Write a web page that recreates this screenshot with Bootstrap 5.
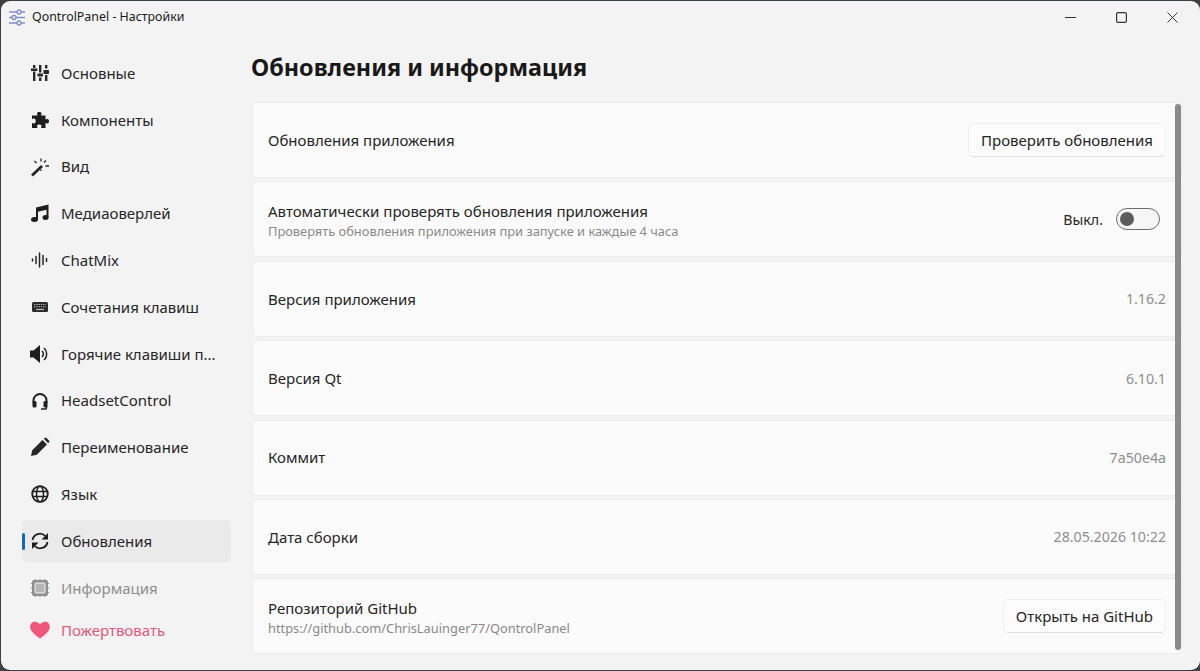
<!DOCTYPE html>
<html lang="ru">
<head>
    <meta charset="UTF-8">
    <title>QontrolPanel - Настройки</title>
    <link href="https://cdn.jsdelivr.net/npm/bootstrap@5.3.0/dist/css/bootstrap.min.css" rel="stylesheet">
    <style>
        html, body { height: 100%; overflow: hidden; }
        body { background: #3b4046; font-family: "Noto Sans", "Open Sans", sans-serif; color: #1b1b1b; }
        .app-window { height: 669px; background: #f3f3f3; border-radius: 9px; margin: 1px 0 0 1px; }
        .title-bar { height: 33px; font-size: 12.4px; padding-left: 8px; }
        .title-bar .logo { margin-right: 7px; }
        .win-btns { width: 155px; }
        .win-btns span { width: 51px; display: flex; justify-content: center; }
        .side { width: 250px; padding: 18px 0 0 21px; flex-shrink: 0; }
        .side-item { height: 42px; width: 209px; margin-bottom: 4.8px; font-size: 15px; color: #262626; border-radius: 5px; padding-left: 8px; position: relative; }
        .side-item svg { width: 20px; height: 20px; margin-right: 11px; flex-shrink: 0; }
        .side-item.active { background: #eaeaea; }
        .side-item.active::before { content: ""; position: absolute; left: 0; top: 13px; width: 3px; height: 17px; background: #0f6cbd; border-radius: 2px; }
        .side-item.muted { color: #8e8e8e; }
        .side-item.donate { color: #e8587a; margin-top: -4.500px; }
        .side-label { white-space: nowrap; overflow: hidden; }
        .content { flex: 1; padding-right: 18px; position: relative; }
        .page-title { font-size: 23.400px; font-weight: 700; line-height: 32px; margin: 17px 0 19px; color: #191919; }
        .set-card { height: 76px; margin: 0 0 3.400px 1px; background: #fbfbfb; border: 1px solid #ededed; border-radius: 5px; padding: 0 15px; font-size: 15px; color: #262626; }
        .set-card small { display: block; font-size: 12.850px; line-height: 16px; margin-top: 2.500px; color: #8a8a8a; }
        .set-card .two-line { line-height: 20px; padding-top: 1px; }
        .set-value { font-size: 14.200px; color: #8f8f8f; }
        .set-btn { font-size: 15px; height: 34px; padding: 0 12px; background: #fcfcfc; color: #262626; border: 1px solid #efefef; border-bottom-color: #dedede; border-radius: 5px; display: flex; align-items: center; }
        .toggle-text { font-size: 14.200px; margin-right: 13px; }
        .toggle { width: 44px; height: 22px; border: 1px solid #6e6e6e; border-radius: 11px; background: #f6f6f6; padding: 3px; margin-right: 6px; }
        .toggle i { display: block; width: 14px; height: 14px; border-radius: 50%; background: #5c5c5c; }
        .scroll-thumb { position: absolute; right: 19px; top: 70px; width: 6px; height: 546px; background: #8a8a8a; border-radius: 3px; }
    </style>
</head>
<body>
    <div class="app-window d-flex flex-column">
        <!-- Заголовок окна -->
        <div class="title-bar d-flex align-items-center">
            <svg class="logo" width="16" height="17" viewBox="0 0 16 17" fill="none" stroke="#7f8fd0" stroke-width="1.3">
                <path d="M0 3h16M0 8.500h16M0 14h16"/>
                <circle cx="10" cy="3" r="2" fill="#f3f3f3"/><circle cx="5" cy="8.500" r="2" fill="#f3f3f3"/><circle cx="10" cy="14" r="2" fill="#f3f3f3"/>
            </svg>
            <span>QontrolPanel - Настройки</span>
            <div class="win-btns d-flex ms-auto align-items-center">
                <span><svg width="11" height="11" viewBox="0 0 11 11" stroke="#333" fill="none"><path d="M0 5.500h11"/></svg></span>
                <span><svg width="11" height="11" viewBox="0 0 11 11" stroke="#333" stroke-width="1.2" fill="none"><rect x=".6" y=".6" width="9.800" height="9.800" rx="1.500"/></svg></span>
                <span><svg width="11" height="11" viewBox="0 0 11 11" stroke="#333" fill="none"><path d="M.5.500l10 10M10.500.500l-10 10"/></svg></span>
            </div>
        </div>

        <div class="d-flex flex-grow-1">
            <!-- Боковое меню -->
            <nav class="side">
                <div class="side-item d-flex align-items-center"><svg viewBox="0 0 20 20" fill="#262626"><path d="M3 2h2.400v3H3zM3 8.500h2.400V18H3zM1 5.500h6.400v2.400H1zM9 2h2.400v7.500H9zM9 14.500h2.400V18H9zM7.500 10.500h5.400v3H7.500zM15 2h2.400v3.500H15zM15 12h2.400v6H15zM13.500 7h5.400v4h-5.400z"/></svg><span>Основные</span></div>
                <div class="side-item d-flex align-items-center"><svg viewBox="0 0 20 20" fill="#1e1e1e"><path d="M7 3.500C7 1.500 11.500 1.500 11.500 3.500c0 1-.5 1.200-.5 2h4.500v4c.8 0 1-.5 2-.5 2 0 2 4.500 0 4.500-1 0-1.200-.5-2-.5V18H11c0-.8.5-1 .5-2 0-2-4.500-2-4.500 0 0 1 .5 1.200.5 2H2v-5c.8 0 1 .5 2 .5 2.300 0 2.300-5 0-5-1 0-1.200.5-2 .5V5.500h5.500c0-.8-.5-1-.5-2z"/></svg><span>Компоненты</span></div>
                <div class="side-item d-flex align-items-center"><svg viewBox="0 0 20 20" fill="#262626" stroke="#262626"><path d="M1 17.500L11 8l2 2L3 19.500z" stroke="none"/><path d="M11 1.500v3M11 12.500v1.500M4.500 4l2 2M16 3.500l-2 2M15.500 9h3.500" stroke-width="1.300" fill="none"/></svg><span>Вид</span></div>
                <div class="side-item d-flex align-items-center"><svg viewBox="0 0 20 20" fill="#1e1e1e"><path d="M6 4.500L18.500 1.500v13h-2V6.800L8 8.800v8h-2z"/><ellipse cx="4.500" cy="16.500" rx="3.500" ry="2.500"/><ellipse cx="15.500" cy="14.500" rx="3" ry="2.500"/></svg><span>Медиаоверлей</span></div>
                <div class="side-item d-flex align-items-center"><svg viewBox="0 0 20 20" stroke="#262626" stroke-width="1.500" stroke-linecap="round"><path d="M2.500 9v2M6 6.500v7M9.500 3v14M13 5.500v9M16.500 8.500v3"/></svg><span>ChatMix</span></div>
                <div class="side-item d-flex align-items-center"><svg viewBox="0 0 20 20"><rect x="2" y="5" width="16" height="10" rx="1.500" fill="#2b2b2b"/><path d="M4 7.500h12M4 9.800h12" stroke="#bbb" stroke-width="1" stroke-dasharray="1.300 1"/><path d="M6 12.500h8" stroke="#bbb" stroke-width="1.200"/></svg><span>Сочетания клавиш</span></div>
                <div class="side-item d-flex align-items-center"><svg viewBox="0 0 20 20" fill="none" stroke="#1e1e1e"><path d="M0 6.500h3.500L10 1v18L3.500 13.500H0z" fill="#1e1e1e" stroke="none"/><path d="M12 7a4 4 0 0 1 0 6M14 4a8 8 0 0 1 0 12" stroke-width="1.500"/></svg><span class="side-label">Горячие клавиши п...</span></div>
                <div class="side-item d-flex align-items-center"><svg viewBox="0 0 20 20" fill="none" stroke="#1e1e1e"><path d="M3.500 12V9.500a6.500 6.500 0 0 1 13 0V12" stroke-width="2"/><rect x="2.500" y="10" width="4" height="6.500" rx="1.500" fill="#1e1e1e" stroke="none"/><rect x="13.500" y="10" width="4" height="6.500" rx="1.500" fill="#1e1e1e" stroke="none"/><path d="M16.500 15.500v1.500a1 1 0 0 1-1 1H11" stroke-width="1.400"/></svg><span>HeadsetControl</span></div>
                <div class="side-item d-flex align-items-center"><svg viewBox="0 0 20 20" fill="#262626"><path d="M1 19l1.200-5.800L12.500 3l4.500 4.500L6.800 17.800zM13.800 1.800l1-.8c.6-.4 1.200-.4 1.700 0l2.500 2.500c.5.500.5 1.200 0 1.700l-.8 1z"/></svg><span>Переименование</span></div>
                <div class="side-item d-flex align-items-center"><svg viewBox="0 0 20 20" fill="none" stroke="#1e1e1e" stroke-width="1.500"><circle cx="10" cy="10" r="7.800" stroke-width="1.800"/><ellipse cx="10" cy="10" rx="3.500" ry="7.800"/><path d="M2.500 7.500h15M2.500 12.500h15"/></svg><span>Язык</span></div>
                <div class="side-item active d-flex align-items-center"><svg viewBox="0 0 20 20" fill="none" stroke="#1e1e1e" stroke-width="1.800"><path d="M2.500 9a7.500 7.500 0 0 1 12.800-4M17.500 11a7.500 7.500 0 0 1-12.800 4"/><path d="M18 2v6.500h-6.500zM2 18v-6.500h6.500z" fill="#1e1e1e" stroke="none"/></svg><span>Обновления</span></div>
                <div class="side-item muted d-flex align-items-center"><svg viewBox="0 0 20 20" fill="#8e8e8e"><path d="M4 2h12a2 2 0 0 1 2 2v12a2 2 0 0 1-2 2H4a2 2 0 0 1-2-2V4a2 2 0 0 1 2-2z"/><path d="M1 5.500h2M1 10h2M1 14.500h2M17 5.500h2M17 10h2M17 14.500h2M5.500 1v2M10 1v2M14.500 1v2M5.500 17v2M10 17v2M14.500 17v2" stroke="#8e8e8e"/><rect x="5" y="5" width="10" height="10" rx="1" fill="#b5b5b5" stroke="#f3f3f3"/></svg><span>Информация</span></div>
                <div class="side-item donate d-flex align-items-center"><svg viewBox="0 0 20 20" fill="#f2567a"><path d="M10 18.500C4 14 .2 11 .2 6.700.2 3.800 2.400 1.800 5 1.800c2 0 3.700 1 5 2.800 1.300-1.800 3-2.800 5-2.800 2.600 0 4.800 2 4.800 4.900 0 4.300-3.800 7.300-9.800 11.800z"/></svg><span>Пожертвовать</span></div>
            </nav>

            <!-- Страница обновлений -->
            <main class="content">
                <h1 class="page-title">Обновления и информация</h1>
                <div class="set-card d-flex align-items-center justify-content-between">
                    <span>Обновления приложения</span>
                    <button class="set-btn">Проверить обновления</button>
                </div>
                <div class="set-card d-flex align-items-center justify-content-between">
                    <div class="two-line">Автоматически проверять обновления приложения<small>Проверять обновления приложения при запуске и каждые 4 часа</small></div>
                    <div class="d-flex align-items-center"><span class="toggle-text">Выкл.</span><div class="toggle"><i></i></div></div>
                </div>
                <div class="set-card d-flex align-items-center justify-content-between"><span>Версия приложения</span><span class="set-value">1.16.2</span></div>
                <div class="set-card d-flex align-items-center justify-content-between"><span>Версия Qt</span><span class="set-value">6.10.1</span></div>
                <div class="set-card d-flex align-items-center justify-content-between"><span>Коммит</span><span class="set-value">7a50e4a</span></div>
                <div class="set-card d-flex align-items-center justify-content-between"><span>Дата сборки</span><span class="set-value">28.05.2026 10:22</span></div>
                <div class="set-card d-flex align-items-center justify-content-between">
                    <div class="two-line">Репозиторий GitHub<small>https://github.com/ChrisLauinger77/QontrolPanel</small></div>
                    <button class="set-btn">Открыть на GitHub</button>
                </div>
                <div class="scroll-thumb"></div>
            </main>
        </div>
    </div>

    <script src="https://cdn.jsdelivr.net/npm/bootstrap@5.3.0/dist/js/bootstrap.bundle.min.js"></script>
</body>
</html>
